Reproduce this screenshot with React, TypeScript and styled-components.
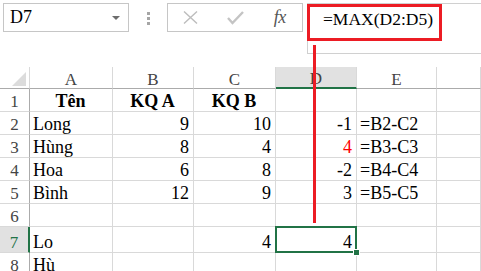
import React from "react";
import styled, { createGlobalStyle } from "styled-components";

const GREEN = "#217346";
const GRID = "#d9d9d9";
const HEAD_LINE = "#ababab";
const SERIF = `"Liberation Serif", "Times New Roman", "DejaVu Serif", serif`;

const GlobalStyle = createGlobalStyle`
  html, body {
    margin: 0;
    padding: 0;
    background: #fff;
  }
  body {
    font-family: ${SERIF};
    overflow: hidden;
  }
`;

type Align = "left" | "right" | "center";

interface ICell {
  text?: string;
  align?: Align;
  bold?: boolean;
  red?: boolean;
  selected?: boolean;
}

interface IRow {
  num: number;
  cells: ICell[];
}

const L = (text: string): ICell => ({ text, align: "left" });
const R = (text: string, extra: Partial<ICell> = {}): ICell => ({
  text,
  align: "right",
  ...extra,
});
const H = (text: string): ICell => ({ text, align: "center", bold: true });

const COLUMNS = ["A", "B", "C", "D", "E", ""];
const ACTIVE_COL = 3;
const ACTIVE_ROW = 7;

const ROWS: IRow[] = [
  { num: 1, cells: [H("Tên"), H("KQ A"), H("KQ B"), {}, {}, {}] },
  { num: 2, cells: [L("Long"), R("9"), R("10"), R("-1"), L("=B2-C2"), {}] },
  {
    num: 3,
    cells: [L("Hùng"), R("8"), R("4"), R("4", { red: true }), L("=B3-C3"), {}],
  },
  { num: 4, cells: [L("Hoa"), R("6"), R("8"), R("-2"), L("=B4-C4"), {}] },
  { num: 5, cells: [L("Bình"), R("12"), R("9"), R("3"), L("=B5-C5"), {}] },
  { num: 6, cells: [{}, {}, {}, {}, {}, {}] },
  {
    num: 7,
    cells: [L("Lo"), {}, R("4"), R("4", { selected: true }), {}, {}],
  },
  { num: 8, cells: [L("Hù"), {}, {}, {}, {}, {}] },
];

const App = () => {
  return (
    <SPage>
      <GlobalStyle />
      <SToolbar>
        <SNameBox>
          D7
          <SArrow />
        </SNameBox>
        <SGrip>
          <span />
          <span />
          <span />
        </SGrip>
        <SFuncBox>
          <SIconSlot>
            <svg width="15" height="13" viewBox="0 0 15 13">
              <path
                d="M1 0.5 L14 12.5 M14 0.5 L1 12.5"
                stroke="#bdbdbd"
                strokeWidth="1.4"
                fill="none"
              />
            </svg>
          </SIconSlot>
          <SIconSlot>
            <svg width="17" height="14" viewBox="0 0 17 14">
              <path
                d="M1 7 L5.5 12 L16 1"
                stroke="#c4c4c4"
                strokeWidth="2.4"
                fill="none"
              />
            </svg>
          </SIconSlot>
          <SIconSlot>
            <SFx>fx</SFx>
          </SIconSlot>
        </SFuncBox>
        <SFormulaBar>
          <SFormulaMark>=MAX(D2:D5)</SFormulaMark>
        </SFormulaBar>
      </SToolbar>

      <SSheet>
        <SCorner />
        {COLUMNS.map((col, i) => (
          <SColHead key={col + i} $active={i === ACTIVE_COL}>
            {col}
          </SColHead>
        ))}

        {ROWS.map((row) => (
          <React.Fragment key={row.num}>
            <SRowHead $active={row.num === ACTIVE_ROW}>{row.num}</SRowHead>
            {row.cells.map((cell, i) => (
              <SCell
                key={i}
                $align={cell.align || "left"}
                $bold={cell.bold}
                $red={cell.red}
                $selected={cell.selected}
              >
                {cell.text}
              </SCell>
            ))}
          </React.Fragment>
        ))}
      </SSheet>

      {/* callout line from the formula box down to the selected cell */}
      <SCallout />
    </SPage>
  );
};

export default App;

const SPage = styled.div`
  position: relative;
  width: 481px;
  height: 271px;
  overflow: hidden;
  background: #fff;
  font-family: ${SERIF};
`;

const SToolbar = styled.div`
  display: flex;
  align-items: flex-start;
  height: 54px;
  padding: 3px 0 0 3px;
  box-sizing: border-box;
  margin-bottom: 13px;
`;

const SNameBox = styled.div`
  width: 126px;
  height: 29px;
  box-sizing: border-box;
  border: 1px solid #c6c6c6;
  display: flex;
  align-items: center;
  justify-content: space-between;
  padding: 0 8px 0 6px;
  font-family: ${SERIF};
  font-size: 18px;
  color: #000;
`;

const SArrow = styled.span`
  width: 0;
  height: 0;
  border-left: 4px solid transparent;
  border-right: 4px solid transparent;
  border-top: 4px solid #6d6d6d;
  margin-top: 1px;
`;

const SGrip = styled.div`
  width: 38px;
  display: flex;
  flex-direction: column;
  align-items: center;
  gap: 2px;
  padding-top: 9px;

  span {
    width: 3px;
    height: 3px;
    background: #a6a6a6;
  }
`;

const SFuncBox = styled.div`
  width: 136px;
  height: 29px;
  box-sizing: border-box;
  border: 1px solid #c6c6c6;
  display: flex;
  align-items: center;
  margin-right: 4px;
`;

const SIconSlot = styled.div`
  width: 45px;
  height: 100%;
  display: flex;
  align-items: center;
  justify-content: center;
`;

const SFx = styled.span`
  font-family: ${SERIF};
  font-style: italic;
  font-size: 18px;
  color: #555;
  letter-spacing: -0.5px;
`;

const SFormulaBar = styled.div`
  flex: 1;
  height: 51px;
  box-sizing: border-box;
  border: 1px solid #d0d0d0;
  border-right: none;
`;

const SFormulaMark = styled.div`
  width: 135px;
  height: 37px;
  box-sizing: border-box;
  margin-left: -1px;
  border: 3px solid #ec1c24;
  padding: 2px 0 0 13px;
  font-family: ${SERIF};
  font-size: 17.5px;
  line-height: 20px;
  color: #000;
  white-space: nowrap;
`;

const SSheet = styled.div`
  display: grid;
  grid-template-columns: 30px 83px 81px 82px 81px 80px 44px;
  grid-template-rows: 22px repeat(6, 23px) 26px 23px;
  font-family: ${SERIF};
`;

const SCorner = styled.div`
  position: relative;
  box-sizing: border-box;
  border-right: 1px solid ${GRID};
  border-bottom: 1px solid ${HEAD_LINE};

  &::after {
    content: "";
    position: absolute;
    right: 3px;
    bottom: 2px;
    width: 0;
    height: 0;
    border-left: 14px solid transparent;
    border-bottom: 14px solid #dcdcdc;
  }
`;

const SColHead = styled.div<{ $active?: boolean }>`
  box-sizing: border-box;
  display: flex;
  align-items: flex-end;
  justify-content: center;
  padding-bottom: 0;
  font-size: 17px;
  line-height: 17px;
  color: #444;
  background: ${(p) => (p.$active ? "#e1e1e1" : "#fff")};
  border-right: 1px solid ${GRID};
  border-bottom: ${(p) =>
    p.$active ? `2px solid ${GREEN}` : `1px solid ${HEAD_LINE}`};
`;

const SRowHead = styled.div<{ $active?: boolean }>`
  box-sizing: border-box;
  display: flex;
  align-items: flex-end;
  justify-content: center;
  padding-bottom: 1px;
  font-size: 17px;
  line-height: 17px;
  color: ${(p) => (p.$active ? GREEN : "#444")};
  background: ${(p) => (p.$active ? "#e1e1e1" : "#fff")};
  border-bottom: 1px solid ${GRID};
  border-right: ${(p) =>
    p.$active ? `2px solid ${GREEN}` : `1px solid ${HEAD_LINE}`};
`;

const SCell = styled.div<{
  $align: Align;
  $bold?: boolean;
  $red?: boolean;
  $selected?: boolean;
}>`
  position: relative;
  box-sizing: border-box;
  display: flex;
  align-items: flex-end;
  justify-content: ${(p) =>
    p.$align === "right"
      ? "flex-end"
      : p.$align === "center"
      ? "center"
      : "flex-start"};
  padding: 0 4px 1px 3px;
  font-size: 18px;
  line-height: 18px;
  font-weight: ${(p) => (p.$bold ? 700 : 400)};
  color: ${(p) => (p.$red ? "#ff0000" : "#000")};
  white-space: nowrap;
  border-right: 1px solid ${GRID};
  border-bottom: 1px solid ${GRID};
  z-index: ${(p) => (p.$selected ? 2 : "auto")};

  ${(p) =>
    p.$selected &&
    `
    &::before {
      content: "";
      position: absolute;
      left: -1px;
      top: -1px;
      right: -1px;
      bottom: -1px;
      border: 2px solid ${GREEN};
    }
    &::after {
      content: "";
      position: absolute;
      right: -4px;
      bottom: -4px;
      width: 5px;
      height: 5px;
      background: ${GREEN};
      border: 1px solid #fff;
    }
  `}
`;

const SCallout = styled.div`
  position: absolute;
  left: 313px;
  top: 45px;
  width: 3px;
  height: 178px;
  background: #ec1c24;
  z-index: 3;
`;
